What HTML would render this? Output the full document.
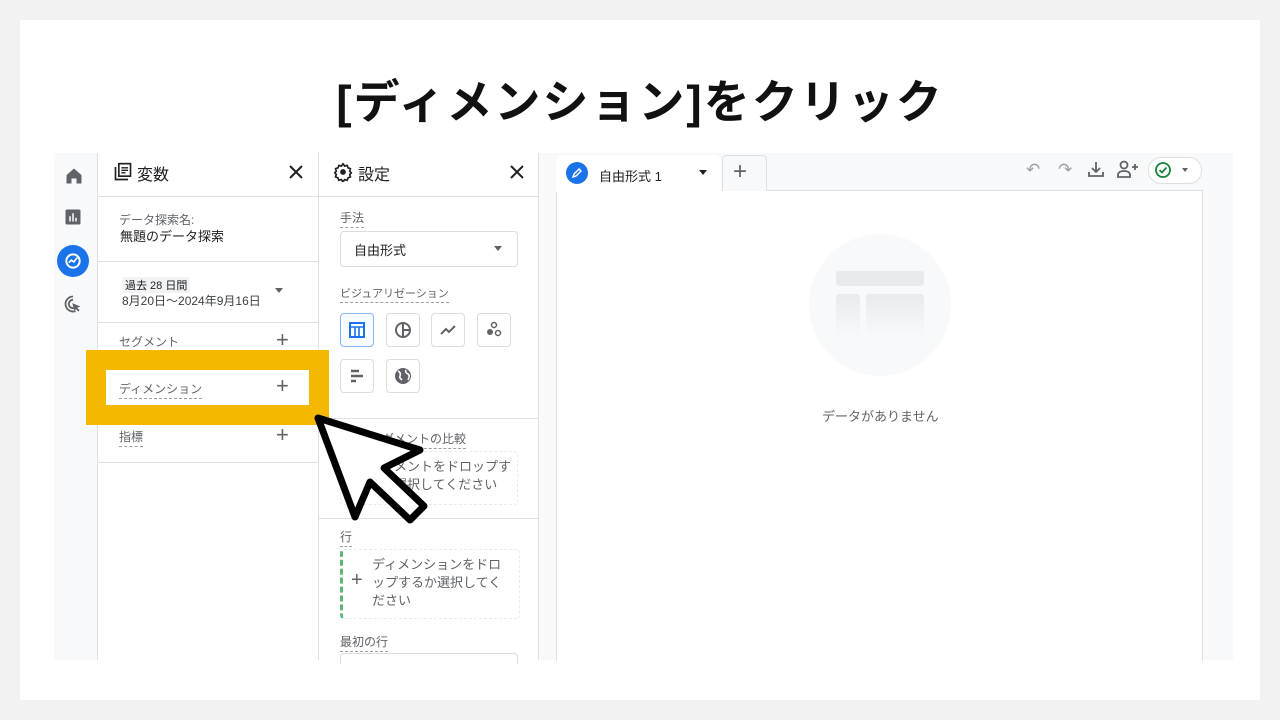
<!DOCTYPE html>
<html><head><meta charset="utf-8"><style>
body{margin:0;width:1280px;height:720px;background:#f2f2f2;position:relative;overflow:hidden;font-family:"Liberation Sans","Noto Sans CJK JP",sans-serif;color:#202124}
.a{position:absolute}
.slide{left:20px;top:20px;width:1240px;height:680px;background:#fff}
.t{font-size:12px;color:#5f6368}
.u{border-bottom:1px dashed #9aa0a6;padding-bottom:1px}
.hl{border-top:1px solid #e0e0e0}
.vb{width:34px;height:34px;border:1px solid #dadce0;border-radius:4px;background:#fff;box-sizing:border-box}
.plus{font-size:22px;color:#5f6368;font-weight:300}
</style></head><body>
<div class="a slide"></div>
<div class="a" style="left:0;width:1280px;top:66px;text-align:center;font-size:46px;font-weight:bold;color:#111;letter-spacing:2px">[ディメンション]をクリック</div>
<div class="a" style="left:54px;top:153px;width:43px;height:507px;background:#f8f9fa;border-right:1px solid #e0e0e0"></div>
<svg class="a" style="left:64px;top:166px" width="20" height="20" viewBox="0 0 24 24"><path d="M3 11L12 3l9 8v10h-6v-6H9v6H3z" fill="#5f6368"/></svg>
<svg class="a" style="left:64px;top:208px" width="18" height="18" viewBox="0 0 24 24"><rect x="2" y="2" width="20" height="20" rx="2" fill="#5f6368"/><rect x="7" y="11" width="2" height="7" fill="#fff"/><rect x="11" y="7" width="2" height="11" fill="#fff"/><rect x="15" y="13" width="2" height="5" fill="#fff"/></svg>
<div class="a" style="left:57px;top:245px;width:32px;height:32px;border-radius:50%;background:#1a73e8"></div>
<svg class="a" style="left:63px;top:251px" width="20" height="20" viewBox="0 0 24 24"><circle cx="12" cy="12" r="8" fill="none" stroke="#fff" stroke-width="2.4"/><path d="M7 14l3-3 3 2 4-5" fill="none" stroke="#fff" stroke-width="2"/></svg>
<svg class="a" style="left:63px;top:294px" width="20" height="20" viewBox="0 0 24 24"><path d="M12 3a9 9 0 1 0 3 17.5M12 7a5 5 0 1 0 1 9.9" fill="none" stroke="#5f6368" stroke-width="2.2"/><path d="M11 11l10 4-4 1.5 3 3-1.5 1.5-3-3L14 21z" fill="#5f6368"/></svg>
<div class="a" style="left:98px;top:153px;width:220px;height:507px;background:#fff;border-right:1px solid #e0e0e0"></div>
<svg class="a" style="left:113px;top:162px" width="20" height="20" viewBox="0 0 24 24"><path d="M3 6v15h15" fill="none" stroke="#202124" stroke-width="2"/><rect x="7" y="2" width="14" height="15" fill="none" stroke="#202124" stroke-width="2"/><path d="M10 7h8M10 10h8M10 13h5" stroke="#202124" stroke-width="1.6"/></svg>
<div class="a" style="left:137px;top:161px;font-size:16px">変数</div>
<svg class="a" style="left:289px;top:165px" width="14" height="14" viewBox="0 0 14 14"><path d="M1 1l12 12M13 1L1 13" stroke="#202124" stroke-width="2"/></svg>
<div class="a hl" style="left:98px;top:196px;width:220px"></div>
<div class="a t" style="left:119px;top:211px">データ探索名:</div>
<div class="a" style="left:120px;top:226px;font-size:13px">無題のデータ探索</div>
<div class="a hl" style="left:98px;top:261px;width:220px"></div>
<div class="a" style="left:122px;top:277px;font-size:11px;background:#f1f3f4;padding:0 3px">過去 28 日間</div>
<div class="a" style="left:122px;top:292px;font-size:12px;color:#3c4043">8月20日～2024年9月16日</div>
<div class="a" style="left:275px;top:288px;border:4px solid transparent;border-top:5px solid #5f6368"></div>
<div class="a hl" style="left:98px;top:322px;width:220px"></div>
<div class="a t u" style="left:119px;top:333px">セグメント</div>
<div class="a plus" style="left:276px;top:327px">+</div>
<div class="a t u" style="left:119px;top:428px">指標</div>
<div class="a plus" style="left:276px;top:422px">+</div>
<div class="a hl" style="left:98px;top:462px;width:220px"></div>
<div class="a" style="left:319px;top:153px;width:219px;height:507px;background:#fff;border-right:1px solid #e0e0e0"></div>
<svg class="a" style="left:333px;top:162px" width="20" height="20" viewBox="0 0 24 24"><path d="M12 2l2 3 3-1 1 3 3 1-1 3 2 2-2 2 1 3-3 1-1 3-3-1-2 3-2-3-3 1-1-3-3-1 1-3-2-2 2-2-1-3 3-1 1-3 3 1z" fill="none" stroke="#202124" stroke-width="2" stroke-linejoin="round"/><circle cx="12" cy="12" r="3.5" fill="#202124"/></svg>
<div class="a" style="left:358px;top:161px;font-size:16px">設定</div>
<svg class="a" style="left:510px;top:165px" width="14" height="14" viewBox="0 0 14 14"><path d="M1 1l12 12M13 1L1 13" stroke="#202124" stroke-width="2"/></svg>
<div class="a hl" style="left:319px;top:196px;width:219px"></div>
<div class="a t u" style="left:340px;top:209px">手法</div>
<div class="a" style="left:340px;top:231px;width:176px;height:34px;border:1px solid #dadce0;border-radius:4px"></div>
<div class="a" style="left:354px;top:240px;font-size:13px">自由形式</div>
<div class="a" style="left:494px;top:246px;border:4px solid transparent;border-top:5px solid #5f6368"></div>
<div class="a t u" style="left:340px;top:285px;font-size:11px">ビジュアリゼーション</div>
<div class="a vb" style="left:340px;top:313px;border-color:#8ab4f8;background:#f8fbff"></div>
<svg class="a" style="left:348px;top:321px" width="18" height="18" viewBox="0 0 18 18"><rect x="2" y="2" width="14" height="14" fill="none" stroke="#1a73e8" stroke-width="2"/><path d="M2 6h14M7 6v10M11 6v10" stroke="#1a73e8" stroke-width="1.6"/></svg>
<div class="a vb" style="left:386px;top:313px"></div>
<svg class="a" style="left:394px;top:321px" width="18" height="18" viewBox="0 0 18 18"><circle cx="9" cy="9" r="7" fill="none" stroke="#5f6368" stroke-width="2"/><path d="M9 2v14M9 9h7" stroke="#5f6368" stroke-width="2"/></svg>
<div class="a vb" style="left:431px;top:313px"></div>
<svg class="a" style="left:439px;top:321px" width="18" height="18" viewBox="0 0 18 18"><path d="M2 13l5-5 3 3 6-6" fill="none" stroke="#5f6368" stroke-width="2"/></svg>
<div class="a vb" style="left:477px;top:313px"></div>
<svg class="a" style="left:485px;top:321px" width="18" height="18" viewBox="0 0 18 18"><circle cx="9" cy="4" r="2.5" fill="none" stroke="#5f6368" stroke-width="1.5"/><circle cx="5" cy="11" r="3" fill="#5f6368"/><circle cx="13" cy="12" r="2.5" fill="none" stroke="#5f6368" stroke-width="1.5"/></svg>
<div class="a vb" style="left:340px;top:359px"></div>
<svg class="a" style="left:348px;top:367px" width="18" height="18" viewBox="0 0 18 18"><path d="M3 4h8M3 9h12M3 14h5" stroke="#5f6368" stroke-width="2.4"/></svg>
<div class="a vb" style="left:386px;top:359px"></div>
<svg class="a" style="left:393px;top:366px" width="20" height="20" viewBox="0 0 20 20"><circle cx="10" cy="10" r="8" fill="#5f6368"/><path d="M5 5c2 1 3 3 2 5s1 3 2 4M13 4c-1 2 0 3 2 4s1 4 0 6" fill="none" stroke="#fff" stroke-width="1.6"/></svg>
<div class="a hl" style="left:319px;top:418px;width:219px"></div>
<div class="a t u" style="left:370px;top:430px">セグメントの比較</div>
<div class="a" style="left:340px;top:451px;width:176px;height:52px;border:1px dashed #e8eaed;border-radius:4px"></div>
<div class="a" style="left:368px;top:458px;font-size:13px;color:#5f6368;line-height:18px">セグメントをドロップす<br>るか選択してください</div>
<div class="a hl" style="left:319px;top:518px;width:219px"></div>
<div class="a t u" style="left:340px;top:528px">行</div>
<div class="a" style="left:340px;top:549px;width:176px;height:68px;border:1px dashed #e8eaed;border-left:3px dashed #5bb974;border-radius:4px"></div>
<div class="a plus" style="left:351px;top:569px;font-size:20px">+</div>
<div class="a" style="left:372px;top:556px;font-size:13px;color:#5f6368;line-height:18px">ディメンションをドロ<br>ップするか選択してく<br>ださい</div>
<div class="a t u" style="left:340px;top:633px">最初の行</div>
<div class="a" style="left:340px;top:653px;width:176px;height:10px;border:1px solid #dadce0;border-bottom:none;border-radius:4px 4px 0 0"></div>
<div class="a" style="left:539px;top:153px;width:694px;height:507px;background:#f8f9fa"></div>
<div class="a" style="left:556px;top:190px;width:645px;height:470px;background:#fff;border:1px solid #e0e0e0;border-bottom:none"></div>
<div class="a" style="left:556px;top:155px;width:165px;height:37px;background:#fff;border-radius:6px 6px 0 0"></div>
<div class="a" style="left:722px;top:155px;width:43px;height:35px;background:#f8f9fa;border:1px solid #e0e0e0;border-bottom:none;border-radius:4px 4px 0 0"></div>
<div class="a" style="left:733px;top:158px;font-size:24px;color:#5f6368;font-weight:300">+</div>
<div class="a" style="left:566px;top:162px;width:22px;height:22px;border-radius:50%;background:#1a73e8"></div>
<svg class="a" style="left:571px;top:167px" width="12" height="12" viewBox="0 0 12 12"><path d="M2 10l1-3 5-5 2 2-5 5z" fill="none" stroke="#fff" stroke-width="1.5"/></svg>
<div class="a" style="left:599px;top:166px;font-size:13px">自由形式 1</div>
<div class="a" style="left:699px;top:170px;border:4px solid transparent;border-top:5px solid #202124"></div>
<div class="a" style="left:1026px;top:160px;font-size:17px;color:#9aa0a6">↶</div>
<div class="a" style="left:1058px;top:160px;font-size:17px;color:#9aa0a6">↷</div>
<svg class="a" style="left:1087px;top:160px" width="18" height="18" viewBox="0 0 18 18"><path d="M9 2v10M5 8l4 4 4-4M2 12v4h14v-4" fill="none" stroke="#5f6368" stroke-width="1.8"/></svg>
<svg class="a" style="left:1116px;top:159px" width="24" height="20" viewBox="0 0 24 20"><circle cx="8" cy="6" r="3.5" fill="none" stroke="#5f6368" stroke-width="1.8"/><path d="M2 18v-2c0-3 3-4 6-4s6 1 6 4v2z" fill="none" stroke="#5f6368" stroke-width="1.8"/><path d="M19 5v6M16 8h6" stroke="#5f6368" stroke-width="1.8"/></svg>
<div class="a" style="left:1148px;top:157px;width:52px;height:25px;border:1px solid #e0e0e0;border-radius:13px;background:#fff"></div>
<svg class="a" style="left:1154px;top:161px" width="18" height="18" viewBox="0 0 18 18"><circle cx="9" cy="9" r="7" fill="none" stroke="#188038" stroke-width="1.8"/><path d="M5.5 9l2.5 2.5 4.5-5" fill="none" stroke="#188038" stroke-width="1.8"/></svg>
<div class="a" style="left:1182px;top:168px;border:3.5px solid transparent;border-top:4px solid #5f6368"></div>
<div class="a" style="left:809px;top:234px;width:142px;height:142px;border-radius:50%;background:#f8f9fa"></div>
<div class="a" style="left:836px;top:271px;width:88px;height:15px;border-radius:3px;background:#e8eaed"></div>
<div class="a" style="left:836px;top:294px;width:24px;height:42px;border-radius:3px;background:linear-gradient(#e8eaed,#f8f9fa)"></div>
<div class="a" style="left:866px;top:294px;width:58px;height:42px;border-radius:3px;background:linear-gradient(#e8eaed,#f8f9fa)"></div>
<div class="a" style="left:822px;top:406px;font-size:13px;color:#5f6368">データがありません</div>
<div class="a" style="left:86px;top:350px;width:243px;height:75px;background:#f5b800"></div>
<div class="a" style="left:106px;top:370px;width:203px;height:35px;background:#fff"></div>
<div class="a t u" style="left:119px;top:380px">ディメンション</div>
<div class="a plus" style="left:276px;top:373px">+</div>
<svg class="a" style="left:300px;top:400px" width="140" height="130" viewBox="0 0 140 130"><path d="M18 18L55 117 70 82 110 120 124 106 84 68 120 50z" fill="#fff" stroke="#000" stroke-width="7" stroke-linejoin="round"/></svg>
</body></html>
